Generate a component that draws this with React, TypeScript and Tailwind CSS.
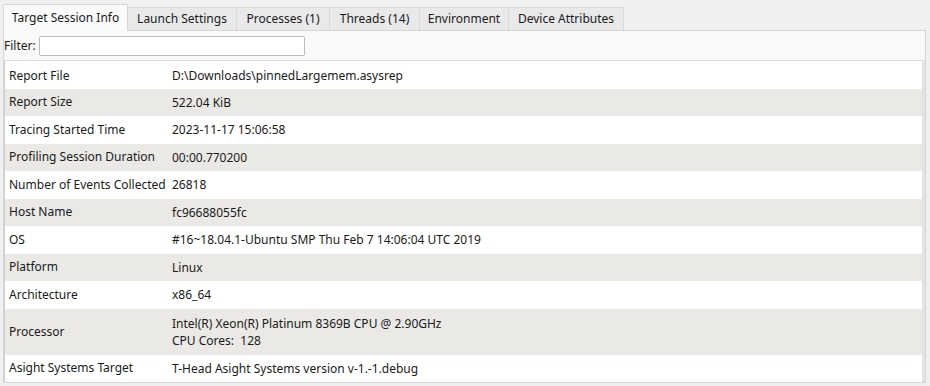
const tabs = [
  { label: "Target Session Info", w: "w-[125px]" },
  { label: "Launch Settings", w: "w-[109px]" },
  { label: "Processes (1)", w: "w-[93px]" },
  { label: "Threads (14)", w: "w-[90px]" },
  { label: "Environment", w: "w-[89px]" },
  { label: "Device Attributes", w: "w-[115px]" },
];

const rows: { name: string; value: string[] }[] = [
  { name: "Report File", value: ["D:\\Downloads\\pinnedLargemem.asysrep"] },
  { name: "Report Size", value: ["522.04 KiB"] },
  { name: "Tracing Started Time", value: ["2023-11-17 15:06:58"] },
  { name: "Profiling Session Duration", value: ["00:00.770200"] },
  { name: "Number of Events Collected", value: ["26818"] },
  { name: "Host Name", value: ["fc96688055fc"] },
  { name: "OS", value: ["#16~18.04.1-Ubuntu SMP Thu Feb 7 14:06:04 UTC 2019"] },
  { name: "Platform", value: ["Linux"] },
  { name: "Architecture", value: ["x86_64"] },
  {
    name: "Processor",
    value: ["Intel(R) Xeon(R) Platinum 8369B CPU @ 2.90GHz", "CPU Cores:\u00a0\u00a0128"],
  },
  { name: "Asight Systems Target", value: ["T-Head Asight Systems version v-1.-1.debug"] },
];

export default function App() {
  return (
    <div className="h-[386px] w-[930px] overflow-hidden bg-[#f0f0f0] pl-[3px] pr-[4px] pt-[4px] font-['Noto_Sans',sans-serif] text-[12px] text-[#1a1a1a]">
      <div className="flex items-end">
        {tabs.map((t, i) =>
          i === 0 ? (
            <div
              key={t.label}
              className={`${t.w} relative z-10 -mb-px flex h-[27px] items-center justify-center rounded-t-[2px] border border-b-0 border-[#d6d6d6] bg-[#fafafa]`}
            >
              {t.label}
            </div>
          ) : (
            <div
              key={t.label}
              className={`${t.w} flex h-[23px] items-center justify-center border border-l-0 border-b-0 border-[#d9d9d9] bg-[#e9e9e9]`}
            >
              {t.label}
            </div>
          )
        )}
      </div>
      <div className="border border-[#d6d6d6] bg-[#f9f9f9]">
        <div className="flex h-[29px] items-center gap-[3px]">
          <span>Filter:</span>
          <div className="h-[20px] w-[266px] rounded-[2px] border border-[#bcbcbc] bg-white" />
        </div>
        <div className="border-t border-[#dcdcdc] border-l border-l-[#cfcfcf] border-r-[3px] border-r-[#e3e3e3] bg-white">
          {rows.map((r, i) => (
            <div
              key={r.name}
              className={`flex items-center ${r.value.length > 1 ? "h-[46px]" : "h-[27.5px]"} ${
                i % 2 === 1 ? "bg-[#eae9e6]" : "bg-white"
              } ${i === 0 ? "pt-[2px]" : ""}`}
            >
              <div className="w-[167px] shrink-0 pl-[4px]">{r.name}</div>
              <div className="flex flex-col leading-[17px]">
                {r.value.map((v) => (
                  <span key={v}>{v}</span>
                ))}
              </div>
            </div>
          ))}
        </div>
      </div>
    </div>
  );
}
